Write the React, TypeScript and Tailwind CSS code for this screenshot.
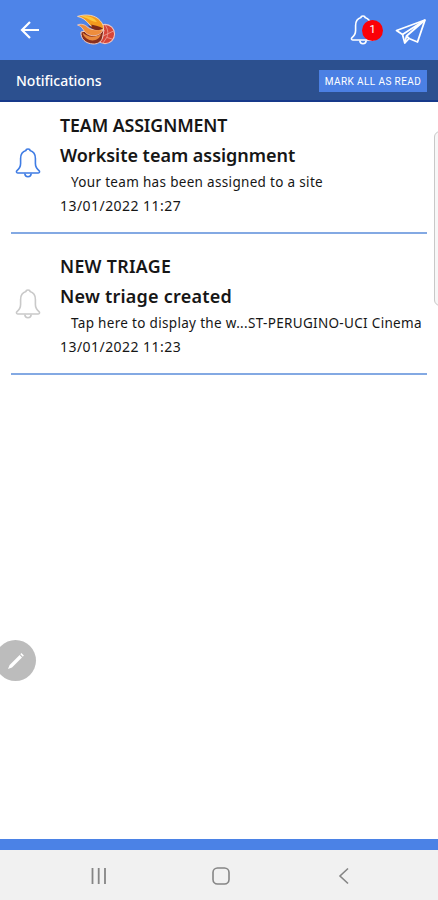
type Notification = {
  category: string;
  title: string;
  body: string;
  date: string;
  unread: boolean;
  categoryClass: string;
  titleClass: string;
  bodyClass: string;
};

const notifications: Notification[] = [
  {
    category: "TEAM ASSIGNMENT",
    title: "Worksite team assignment",
    body: "Your team has been assigned to a site",
    date: "13/01/2022 11:27",
    unread: true,
    categoryClass: "tracking-[-0.1px]",
    titleClass: "tracking-[-0.02px]",
    bodyClass: "tracking-[0.32px]",
  },
  {
    category: "NEW TRIAGE",
    title: "New triage created",
    body: "Tap here to display the w...ST-PERUGINO-UCI Cinema",
    date: "13/01/2022 11:23",
    unread: false,
    categoryClass: "tracking-[0.3px]",
    titleClass: "tracking-[0.22px]",
    bodyClass: "tracking-[0.32px]",
  },
];

function BellIcon({ className }: { className?: string }) {
  return (
    <svg viewBox="0 0 26 32" fill="none" stroke="currentColor" strokeWidth="1.6" strokeLinejoin="round" className={className}>
      <path d="M11 3.5C11 1.4 15 1.4 15 3.5C18.8 4.5 20.4 7.6 20.4 11.5V16.5C20.4 19.8 21.8 21.8 24 23.6C25 24.5 24.6 26 23.3 26H2.7C1.4 26 1 24.5 2 23.6C4.2 21.8 5.6 19.8 5.6 16.5V11.5C5.6 7.6 7.2 4.5 11 3.5Z" />
      <path d="M9.8 26.5C10 30.8 16 30.8 16.2 26.5" />
    </svg>
  );
}

function Logo() {
  return (
    <svg viewBox="0 0 40 34" className="ml-[36px] h-[34px] w-10">
      {/* ball */}
      <circle cx="29" cy="21" r="9.6" fill="#d64538" stroke="#f0c4bd" strokeWidth="1.1" />
      <path d="M29 12C32 16 32.5 20 31 24L27 30M25 24L37.5 18M31 24.5L36 26" fill="none" stroke="#ec9a8c" strokeWidth="0.9" />
      {/* flames */}
      <path d="M5 19C4.5 26 9.5 30.5 17 31C21 31.2 25 29.5 26.5 25L28 17L14 17Z" fill="#8a2f1d" stroke="#f3cfc6" strokeWidth="1" />
      <path d="M1.5 12C5 10.4 9 11.5 12 14.5C15.5 17 21 17.5 27.5 15.5C26.5 20.5 21.5 23.3 16 22.6C11 22 8.8 19 7 16.2C5.6 14 4 12.8 1.5 12Z" fill="#ee8d3c" stroke="#f3cfc6" strokeWidth="0.8" />
      <path d="M1.5 3.4C10 0.6 19.5 2 24 7.5C27 10.5 28 14 27.5 17C21 17 16 14.5 13 11C9.8 7 6.5 4.5 1.5 3.4Z" fill="#f39a1d" stroke="#f5d8bd" strokeWidth="0.9" />
      <path d="M5 3.4C12.5 2.2 17.5 4.2 21 9C15.5 8.5 11 4.5 5 3.4Z" fill="#fdc83c" />
      <path d="M15 11.5C19 12.5 23.5 13.2 27 15.5C21.5 19 14.5 16 11.5 12C15.5 14.5 17 14 15 11.5Z" fill="#7d2a18" />
      <path d="M6.5 19.5C11.5 24.5 18.5 25 25 21C23.5 26.5 18.5 28.4 13.5 27C9.8 25.8 7.2 23 6.5 19.5Z" fill="#ea8a3c" />
    </svg>
  );
}

function PaperPlane() {
  return (
    <svg viewBox="0 0 32 28" fill="none" stroke="white" strokeWidth="1.8" strokeLinejoin="round" className="mt-[3px] h-7 w-8">
      <path d="M30 2L1.5 12.5L7.5 16.5L9.8 25L14 20.5L22.5 24L30 2Z" />
      <path d="M30 2L7.5 16.5M30 2L11.5 18L9.8 25M11.5 18L14 20.5" />
    </svg>
  );
}

function TopBar() {
  return (
    <header className="flex h-[60px] items-center bg-[#4e84e8] pl-5 pr-[11px]">
      <svg viewBox="0 0 20 20" fill="none" stroke="white" strokeWidth="2.2" className="h-5 w-5">
        <path d="M19 10H2.5M10 2L2 10L10 18" />
      </svg>
      <Logo />
      <div className="relative ml-auto mr-[13px] h-8 w-8">
        <BellIcon className="h-8 w-[26px] text-white" />
        <span className="absolute left-3 top-[6px] flex h-[21px] w-[21px] items-center justify-center rounded-full bg-[#fb0007] font-[Roboto] text-[11px] text-white">
          1
        </span>
      </div>
      <PaperPlane />
    </header>
  );
}

function NotificationRow({ item }: { item: Notification }) {
  return (
    <li className="flex h-[141px] border-b-2 border-[#83a9e3] pl-1 pt-[17px]">
      <BellIcon className={item.unread ? "mt-[37px] h-8 w-[26px] text-[#3f7ce4]" : "mt-[37px] h-8 w-[26px] text-[#c9c9c9]"} />
      <div className="ml-[19px] whitespace-nowrap text-[#161616]">
        <h2 className={`text-[17.8px] font-semibold leading-[30px] ${item.categoryClass}`}>{item.category}</h2>
        <h3 className={`text-[18px] font-semibold leading-[30px] ${item.titleClass}`}>{item.title}</h3>
        <p className={`pl-[11px] text-[13.5px] leading-6 ${item.bodyClass}`}>{item.body}</p>
        <p className="text-[14px] leading-6 tracking-[0.45px]">{item.date}</p>
      </div>
    </li>
  );
}

export default function App() {
  return (
    <div className="relative flex h-[900px] w-[438px] flex-col overflow-hidden bg-white font-['Noto_Sans',sans-serif]">
      <TopBar />
      <div className="flex h-[42px] items-center justify-between border-b-2 border-[#16398a] bg-[#2c508f] pl-4 pr-[11px]">
        <h1 className="text-[14px] font-medium text-white">Notifications</h1>
        <button type="button" className="mt-0.5 h-[22px] w-[108px] whitespace-nowrap bg-[#4b80e4] font-[Roboto] text-[10px] tracking-[0.4px] text-white">
          MARK ALL AS READ
        </button>
      </div>

      <ul className="-mt-[9px] flex-1 px-[11px]">
        {notifications.map((item) => (
          <NotificationRow key={item.date} item={item} />
        ))}
      </ul>

      <div className="h-[11px] bg-[#4b82e6]" />
      <nav className="flex h-[50px] items-center bg-[#f1f1f1] pl-[89px] pt-0.5 text-[#858585]">
        <svg viewBox="0 0 20 20" fill="none" stroke="currentColor" strokeWidth="1.8" className="h-5 w-5">
          <path d="M3.5 2V18M9.7 2V18M16 2V18" />
        </svg>
        <svg viewBox="0 0 20 20" fill="none" stroke="currentColor" strokeWidth="1.6" className="ml-[102px] h-5 w-5">
          <rect x="2" y="2" width="16" height="16" rx="4.5" />
        </svg>
        <svg viewBox="0 0 20 20" fill="none" stroke="currentColor" strokeWidth="1.6" className="ml-[102px] h-5 w-5">
          <path d="M15 2.5L7 10L15 17.5" />
        </svg>
      </nav>

      {/* edge panel handle */}
      <div className="absolute -right-2 top-[131px] h-[175px] w-3 rounded-md border border-[#c8c8c8] bg-[#f7f7f7]" />
      {/* floating pen button */}
      <div className="absolute -left-[5px] top-[640px] flex h-[41px] w-[41px] items-center justify-center rounded-full bg-[#bcbcbc]">
        <svg viewBox="0 0 18 18" className="h-[18px] w-[18px]" fill="white">
          <path d="M1 17L2.6 13L12.6 3L15 5.4L5 15.4Z" />
          <path d="M13.3 2.2L14.4 1.1L16.9 3.6L15.8 4.7Z" />
        </svg>
      </div>
    </div>
  );
}
